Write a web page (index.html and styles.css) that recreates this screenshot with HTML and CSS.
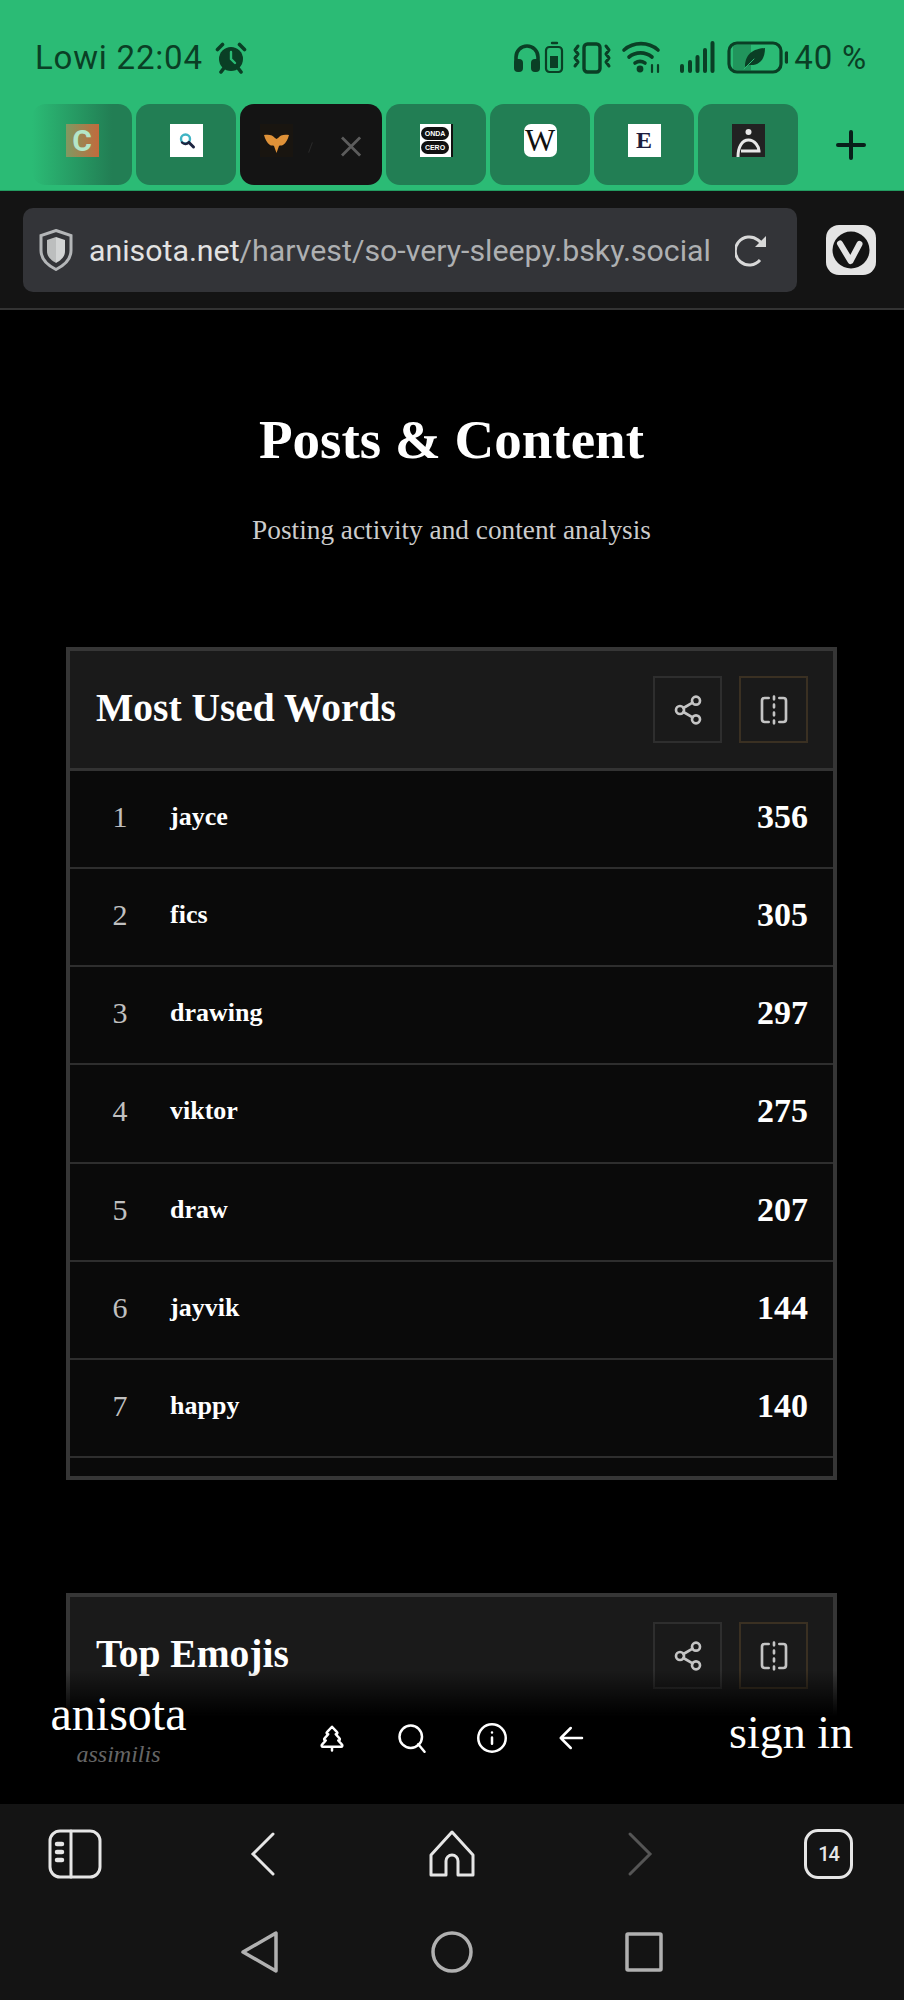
FILE: index.html
```html
<!DOCTYPE html>
<html lang="en">
<head>
    <meta charset="UTF-8">
    <meta name="viewport" content="width=device-width, initial-scale=1.0">
    <title>Posts &amp; Content</title>
    <link rel="stylesheet" href="styles.css">
</head>
<body>
    <div class="chrome-top">
        <div class="status">
            <div class="status-left">
                <span>Lowi 22:04</span>
                <svg class="alarm" viewBox="0 0 32 32" fill="none" stroke-linecap="round">
                    <circle cx="16" cy="17" r="12" fill="#0a3f25"/>
                    <path d="M16 10v7l4 4" stroke="#2bbb75" stroke-width="2.400"/>
                    <path d="M2.500 7.500l5-5M29.500 7.500l-5-5M6 30l3-4M26 30l-3-4" stroke="#0a3f25" stroke-width="3.600"/>
                </svg>
            </div>
            <div class="status-right">
                <svg class="status-icons" viewBox="515 40 275 36" fill="none" stroke="#0a3f25" stroke-width="3.200" stroke-linecap="round" stroke-linejoin="round">
                    <!-- headphones -->
                    <path d="M518 64v-7a11 11 0 0 1 22 0v7" stroke-width="3.600"/>
                    <rect x="516" y="59" width="9" height="13" rx="4" fill="#0a3f25" stroke="none"/>
                    <rect x="533" y="59" width="9" height="13" rx="4" fill="#0a3f25" stroke="none"/>
                    <!-- small battery -->
                    <path d="M554 43h5" stroke-width="2.400"/>
                    <rect x="548" y="47" width="16" height="25" rx="3.500" stroke-width="2.200"/>
                    <rect x="552" y="56" width="8" height="12" fill="#0a3f25" stroke="none"/>
                    <!-- vibrate -->
                    <rect x="586" y="44" width="16" height="28" rx="3.500" stroke-width="3.400"/>
                    <path d="M580 46l-3 4 3 4-3 4 3 4-3 4M608 46l3 4-3 4 3 4-3 4 3 4" stroke-width="3"/>
                    <!-- wifi -->
                    <path d="M626 50a26 26 0 0 1 34 0M631 57a18 18 0 0 1 23 0M637 63a9 9 0 0 1 10 0" stroke-width="3.600"/>
                    <circle cx="642" cy="69" r="3.400" fill="#0a3f25" stroke="none"/>
                    <path d="M654 65v7M660 65v7" stroke-width="2.200"/>
                    <!-- signal -->
                    <path d="M684 66v5M692 62v9M699.500 57v14M707 50v21M714.500 43v28" stroke-width="4" stroke-linecap="round"/>
                    <!-- battery with leaf -->
                    <path d="M735 44.500h18v26h-18z" fill="#0a3f25" fill-opacity=".3" stroke="none"/>
                    <rect x="731" y="43" width="52" height="29" rx="8"/>
                    <path d="M788.500 53v9" stroke-width="3.400"/>
                    <path d="M747 67c0-10 5-18 20-19 0 12-6 18-16 17z" fill="#0a3f25" stroke="none"/>
                    <path d="M746 69l10-10" stroke="#2bbb75" stroke-width="1"/>
                </svg>
                <span>40 %</span>
            </div>
        </div>
        <div class="tabs">
            <div class="tab tab-fade">
                <div class="favicon fav-c">C</div>
            </div>
            <div class="tab">
                <div class="favicon fav-white">
                    <svg viewBox="0 0 33 33" fill="none" stroke-linecap="round">
                        <circle cx="15.500" cy="15" r="4.500" stroke="#3fb4c4" stroke-width="2.400"/>
                        <path d="M12 18.500a4.500 4.500 0 0 0 7-.5" stroke="#1d2440" stroke-width="2.400"/>
                        <path d="M19.500 19l4 4" stroke="#1d2440" stroke-width="3"/>
                    </svg>
                </div>
            </div>
            <div class="tab tab-active">
                <div class="favicon fav-moth">
                    <svg viewBox="0 0 33 33">
                        <path d="M4 11c5-1 9 0 11 3l1.500 1 1.500-1c2-3 6-4 11-3-1 4-3 8-6 10-2 1-3 0-4 1l-2.500 7-2.500-7c-1-1-3 0-4-1-3-2-5-6-6-10z" fill="#e09238"/>
                    </svg>
                </div>
                <span class="tab-slash"></span>
                <svg class="tab-close" viewBox="0 0 21 21" fill="none" stroke="#5c5c5c" stroke-width="3">
                    <path d="M1 1l19 19M20 1L1 20"/>
                </svg>
            </div>
            <div class="tab">
                <div class="favicon fav-onda">
                    <span class="onda-pill">ONDA</span>
                    <span class="onda-pill">CERO</span>
                </div>
            </div>
            <div class="tab">
                <div class="favicon fav-wiki">W</div>
            </div>
            <div class="tab">
                <div class="favicon fav-e">E</div>
            </div>
            <div class="tab">
                <div class="favicon fav-dark">
                    <svg viewBox="0 0 33 33" fill="none" stroke="#e8e8e8">
                        <circle cx="16.500" cy="8" r="3" fill="#e8e8e8" stroke="none"/>
                        <path d="M6 33c0-10 4-17 10.500-17S27 23 27 27H9" stroke-width="3"/>
                    </svg>
                </div>
            </div>
            <svg class="tab-add" viewBox="0 0 30 30" fill="none" stroke="#08201a" stroke-width="4" stroke-linecap="round">
                <path d="M15 2v26M2 15h26"/>
            </svg>
        </div>
    </div>

    <div class="address-row">
        <div class="address">
            <svg class="shield" viewBox="0 0 34 42">
                <path d="M17 1.500l15 5v15c0 9-7 15-15 19C9 36.500 2 30.500 2 21.500v-15z" fill="none" stroke="#b4b6b8" stroke-width="3"/>
                <path d="M17 8l9 3v11c0 6-4 9-9 12z" fill="#d2d4d4"/>
                <path d="M17 8l-9 3v11c0 6 4 9 9 12z" fill="#bcbebe"/>
            </svg>
            <div class="url"><b>anisota.net</b>/harvest/so-very-sleepy.bsky.social</div>
            <svg class="reload" viewBox="0 0 33 33" fill="none" stroke="#d8d8d8" stroke-width="3">
                <path d="M25 26a14 14 0 1 1-2-20l6 5"/>
                <path d="M31 2v11H20z" fill="#d8d8d8" stroke="none"/>
            </svg>
        </div>
        <svg class="vivaldi" viewBox="0 0 50 50">
            <rect x="0" y="0" width="50" height="50" rx="13" fill="#e4e4e4"/>
            <circle cx="25" cy="25" r="18.500" fill="#141414"/>
            <path d="M14 18.500l10.500 17.500 9-17" fill="none" stroke="#e4e4e4" stroke-width="6" stroke-linecap="round" stroke-linejoin="round"/>
        </svg>
    </div>

    <main class="page">
        <header class="page-head">
            <h1>Posts &amp; Content</h1>
            <p>Posting activity and content analysis</p>
        </header>

        <section class="card">
            <div class="card-head">
                <h2>Most Used Words</h2>
                <div class="card-actions">
                    <button class="icon-btn">
                        <svg viewBox="0 0 24 24"><circle cx="18" cy="5" r="3"/><circle cx="6" cy="12" r="3"/><circle cx="18" cy="19" r="3"/><path d="M8.590 13.510l6.830 3.980M15.410 6.510l-6.820 3.980"/></svg>
                    </button>
                    <button class="icon-btn icon-btn-warm">
                        <svg viewBox="0 0 24 24"><path d="M8 3H5a2 2 0 0 0-2 2v14c0 1.100.9 2 2 2h3M16 3h3a2 2 0 0 1 2 2v14a2 2 0 0 1-2 2h-3M12 20v2M12 14v2M12 8v2M12 2v2"/></svg>
                    </button>
                </div>
            </div>
            <ul class="word-list">
                <li class="word-row"><span class="rank">1</span><span class="word">jayce</span><span class="count">356</span></li>
                <li class="word-row"><span class="rank">2</span><span class="word">fics</span><span class="count">305</span></li>
                <li class="word-row"><span class="rank">3</span><span class="word">drawing</span><span class="count">297</span></li>
                <li class="word-row"><span class="rank">4</span><span class="word">viktor</span><span class="count">275</span></li>
                <li class="word-row"><span class="rank">5</span><span class="word">draw</span><span class="count">207</span></li>
                <li class="word-row"><span class="rank">6</span><span class="word">jayvik</span><span class="count">144</span></li>
                <li class="word-row"><span class="rank">7</span><span class="word">happy</span><span class="count">140</span></li>
            </ul>
        </section>

        <section class="card card-next">
            <div class="card-head">
                <h2>Top Emojis</h2>
                <div class="card-actions">
                    <button class="icon-btn">
                        <svg viewBox="0 0 24 24"><circle cx="18" cy="5" r="3"/><circle cx="6" cy="12" r="3"/><circle cx="18" cy="19" r="3"/><path d="M8.590 13.510l6.830 3.980M15.410 6.510l-6.820 3.980"/></svg>
                    </button>
                    <button class="icon-btn icon-btn-warm">
                        <svg viewBox="0 0 24 24"><path d="M8 3H5a2 2 0 0 0-2 2v14c0 1.100.9 2 2 2h3M16 3h3a2 2 0 0 1 2 2v14a2 2 0 0 1-2 2h-3M12 20v2M12 14v2M12 8v2M12 2v2"/></svg>
                    </button>
                </div>
            </div>
        </section>

        <nav class="site-nav">
            <div class="brand">
                <div class="brand-name">anisota</div>
                <div class="brand-sub">assimilis</div>
            </div>
            <div class="site-icons">
                <svg viewBox="0 0 24 24"><path d="M17 14l3 3.300a1 1 0 0 1-.7 1.700H4.700a1 1 0 0 1-.7-1.700L7 14h-.3a1 1 0 0 1-.7-1.700L9 9h-.2A1 1 0 0 1 8 7.300L12 3l4 4.300a1 1 0 0 1-.8 1.700H15l3 3.300a1 1 0 0 1-.7 1.700H17zM12 22v-3"/></svg>
                <svg viewBox="0 0 24 24"><circle cx="11" cy="11" r="9"/><path d="M22 23l-5-6"/></svg>
                <svg viewBox="0 0 24 24"><circle cx="12" cy="12" r="11"/><path d="M12 16.500v-5M12 7.500h.01"/></svg>
                <svg viewBox="0 0 24 24"><path d="M11 4l-8 8 8 8M3 12h17"/></svg>
            </div>
            <div class="sign-in">sign in</div>
        </nav>
    </main>

    <div class="toolbar">
        <svg viewBox="0 0 60 50" class="tool">
            <rect x="5" y="2" width="50" height="46" rx="10"/>
            <path d="M26 2v46"/>
            <path d="M12 15h5M12 23h5M12 31h5" stroke-width="4.500" stroke-linecap="round"/>
        </svg>
        <svg viewBox="0 0 60 50" class="tool"><path d="M40 5L20 25l20 20"/></svg>
        <svg viewBox="0 0 60 50" class="tool">
            <path d="M30 3L9 26v20h15V32a6 6 0 0 1 12 0v14h15V26z" stroke-linejoin="round"/>
        </svg>
        <svg viewBox="0 0 60 50" class="tool tool-off"><path d="M20 5l20 20-20 20"/></svg>
        <div class="tab-count">14</div>
    </div>

    <div class="android-nav">
        <svg viewBox="0 0 48 42"><path d="M40 2v38L7 21z" stroke-linejoin="round"/></svg>
        <svg viewBox="0 0 48 42"><circle cx="24" cy="21" r="19"/></svg>
        <svg viewBox="0 0 48 42"><rect x="7" y="3" width="34" height="36" rx="1"/></svg>
    </div>
</body>
</html>
```

FILE: styles.css
```css
* {
    box-sizing: border-box;
}

body {
    margin: 0;
    height: 2000px;
    display: flex;
    flex-direction: column;
    background-color: #000;
    font-family: 'Liberation Serif', serif;
    overflow: hidden;
}

/* green status + tab strip */
.chrome-top {
    height: 191px;
    flex: none;
    background-color: #2bbb75;
    color: #0a3f25;
    font-family: Roboto, sans-serif;
    border-bottom: 1px solid #239a60;
}

.status {
    height: 104px;
    padding: 40px 37px 0 35px;
    display: flex;
    justify-content: space-between;
    align-items: flex-start;
    font-size: 33px;
    line-height: 36px;
    letter-spacing: 0.8px;
}

.status-left,
.status-right {
    display: flex;
    align-items: center;
}

.status-left {
    gap: 12px;
}

.status-right {
    gap: 6px;
}

.alarm {
    width: 32px;
    height: 32px;
}

.status-icons {
    width: 275px;
    height: 36px;
}

.tabs {
    padding-left: 32px;
    display: flex;
    gap: 4px;
}

.tab {
    width: 100px;
    height: 81px;
    padding-top: 20px;
    display: flex;
    justify-content: center;
    background-color: #227e54;
    border-radius: 14px;
}

.tab-fade {
    background: linear-gradient(to right, #2bbb75, #227e54 80%);
}

.tab-active {
    width: 142px;
    padding-left: 20px;
    padding-right: 21px;
    justify-content: flex-start;
    background-color: #141414;
}

.tab-slash {
    width: 1px;
    height: 11px;
    margin: 18px 0 0 17px;
    background-color: #2a2a2a;
    transform: rotate(20deg);
}

.tab-close {
    width: 21px;
    height: 21px;
    margin: 12px 0 0 30px;
}

.tab-add {
    width: 30px;
    height: 30px;
    margin: 26px 0 0 34px;
}

.favicon {
    width: 33px;
    height: 33px;
    display: flex;
    align-items: center;
    justify-content: center;
    background-color: #fff;
}

.favicon svg {
    display: block;
    width: 33px;
    height: 33px;
}

.fav-c {
    background: linear-gradient(to right, #7f9a62, #c26a3c);
    color: #b4e6c8;
    font: bold 30px Roboto, sans-serif;
}

.fav-moth {
    background-color: #191510;
}

.fav-onda {
    flex-direction: column;
    gap: 1px;
    border-right: 2px solid #111;
}

.onda-pill {
    width: 28px;
    height: 13px;
    background-color: #111;
    border-radius: 7px;
    color: #fff;
    font: bold 7px/13px 'Liberation Sans', sans-serif;
    text-align: center;
}

.fav-wiki {
    border-radius: 7px;
    color: #111;
    font: 32px 'Liberation Serif', serif;
}

.fav-e {
    color: #1d1d3d;
    font: bold 24px 'Liberation Serif', serif;
}

.fav-dark {
    background-color: #222;
}

/* address bar */
.address-row {
    height: 119px;
    flex: none;
    padding: 17px 28px 0 23px;
    display: flex;
    justify-content: space-between;
    background-color: #141414;
    border-bottom: 2px solid #333;
}

.address {
    width: 774px;
    height: 84px;
    padding: 0 29px 0 16px;
    display: flex;
    align-items: center;
    gap: 16px;
    background-color: #333438;
    border-radius: 10px;
    color: #aeb0b2;
    font-family: Roboto, sans-serif;
    font-size: 30.3px;
}

.url b {
    font-weight: 400;
    color: #e2e2e2;
}

.shield {
    width: 34px;
    height: 42px;
    flex: none;
}

.reload {
    width: 33px;
    height: 33px;
    flex: none;
    margin-left: auto;
}

.vivaldi {
    width: 50px;
    height: 50px;
    margin-top: 17px;
}

/* page content */
.page {
    position: relative;
    flex: 1;
    overflow: hidden;
    padding: 0 67px 0 66px;
    background-color: #000;
}

.page-head {
    padding-top: 95px;
    height: 337px;
    text-align: center;
    color: #fff;
}

.page-head h1 {
    margin: 0;
    font-size: 55px;
    line-height: 70px;
    font-weight: 700;
}

.page-head p {
    margin: 37px 0 0;
    font-size: 27.3px;
    line-height: 36px;
    color: #ccc;
}

.card {
    height: 833px;
    overflow: hidden;
    border: 4px solid #363636;
    background-color: #0a0a0a;
}

.card-next {
    margin-top: 113px;
}

.card-head {
    height: 120px;
    padding: 0 25px 4px 26px;
    display: flex;
    align-items: center;
    justify-content: space-between;
    background-color: #1a1a1a;
    border-bottom: 3px solid #333;
}

.card-head h2 {
    margin: 0;
    font-size: 39.5px;
    font-weight: 700;
    color: #fff;
}

.card-actions {
    display: flex;
    gap: 17px;
    margin-top: 4px;
}

.icon-btn {
    width: 69px;
    height: 67px;
    padding: 0;
    display: flex;
    align-items: center;
    justify-content: center;
    background: none;
    border: 2px solid #2e2e2e;
}

.icon-btn-warm {
    border-color: #3a3022;
}

.icon-btn svg {
    width: 32px;
    height: 32px;
    fill: none;
    stroke: #c4c4c4;
    stroke-width: 2;
    stroke-linecap: round;
    stroke-linejoin: round;
}

.word-list {
    margin: 0;
    padding: 0;
    list-style: none;
}

.word-row {
    height: 98.150px;
    padding: 0 25px 4px 0;
    display: flex;
    align-items: center;
    border-bottom: 2px solid #2e2e2e;
    color: #fff;
}

.rank {
    width: 78px;
    padding-left: 22px;
    text-align: center;
    font-size: 30px;
    color: #c0c0c0;
}

.word {
    flex: 1;
    font-size: 26px;
    font-weight: 700;
    margin-left: 22px;
}

.count {
    font-size: 34px;
    font-weight: 700;
}

/* anisota bar floats over the page, fades the cards out */
.site-nav {
    position: absolute;
    left: 0;
    right: 0;
    bottom: 0;
    height: 134px;
    padding: 21px 51px 0 50px;
    display: flex;
    justify-content: space-between;
    color: #fff;
    background: linear-gradient(to bottom, rgba(0, 0, 0, 0), #000 46px);
}

.brand {
    width: 137px;
    text-align: center;
}

.brand-name {
    font-size: 48px;
    line-height: 46px;
}

.brand-sub {
    margin-top: 4px;
    font-size: 24px;
    font-style: italic;
    color: #666;
}

.site-icons {
    display: flex;
    gap: 50px;
    margin: 32px 12px 0 0;
}

.site-icons svg {
    width: 30px;
    height: 30px;
    fill: none;
    stroke: #fff;
    stroke-width: 2;
    stroke-linecap: round;
    stroke-linejoin: round;
}

.sign-in {
    margin-top: 19px;
    font-size: 46px;
    line-height: 46px;
}

/* browser toolbar + android buttons */
.toolbar {
    height: 98px;
    flex: none;
    padding: 25px 45px 0;
    display: flex;
    justify-content: space-between;
    background-color: #141414;
}

.tool {
    width: 60px;
    height: 50px;
    fill: none;
    stroke: #e6e6e6;
    stroke-width: 3;
    stroke-linecap: round;
}

.tool-off {
    stroke: #555;
}

.tab-count {
    width: 49px;
    height: 50px;
    margin: 0 6px;
    display: flex;
    align-items: center;
    justify-content: center;
    border: 3px solid #e6e6e6;
    border-radius: 14px;
    color: #e6e6e6;
    font: 500 20px Roboto, sans-serif;
    letter-spacing: -1px;
}

.android-nav {
    height: 98px;
    flex: none;
    padding-top: 29px;
    display: flex;
    justify-content: center;
    gap: 144px;
    background-color: #141414;
}

.android-nav svg {
    width: 48px;
    height: 42px;
    fill: none;
    stroke: #b0b0b0;
    stroke-width: 3.500;
}
```
